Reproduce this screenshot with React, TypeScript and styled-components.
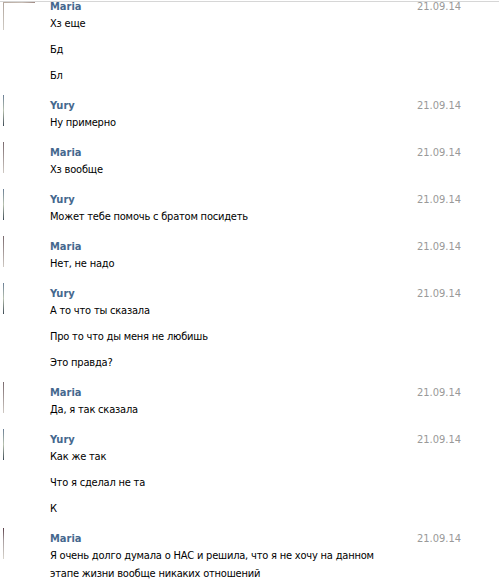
import React from "react";
import styled, { createGlobalStyle } from "styled-components";

const Global = createGlobalStyle`
  html, body { margin: 0; padding: 0; background: #fff; }
  body { font-family: "DejaVu Sans Condensed", "DejaVu Sans", sans-serif; font-size: 11px; color: #000; }
`;

const Page = styled.div`
  margin-top: 1px;
  border-top: 1px solid #d6d6d6;
  width: 499px;
`;

const Group = styled.div<{ $first?: boolean }>`
  display: flex;
  align-items: flex-start;
  margin-top: ${(p) => (p.$first ? "-3px" : "13px")};
  padding: 0 38px 0 3px;
`;

const Avatar = styled.div<{ $tone: string; $top?: boolean }>`
  flex: none;
  width: 1px;
  height: ${(p) => (p.$top ? "28px" : "31px")};
  margin-top: ${(p) => (p.$top ? "3px" : "-3px")};
  background: ${(p) => p.$tone};
  position: relative;
  &::after {
    content: "";
    display: ${(p) => (p.$top ? "block" : "none")};
    position: absolute;
    left: 0;
    top: 0;
    width: 32px;
    height: 1px;
    background: linear-gradient(90deg, #b8aaa0, #c7bdb5 60%, #a08a84);
  }
`;

const Body = styled.div`
  flex: 1;
  margin-left: 46px;
  display: flex;
  flex-direction: column;
`;

const Name = styled.div`
  font-weight: bold;
  color: #45688e;
  line-height: 16px;
  height: 16px;
`;

const Text = styled.div`
  line-height: 18px;
  width: 345px;
  letter-spacing: -0.2px;
  & + & { margin-top: 8px; }
`;

const Date = styled.div`
  flex: none;
  color: #999;
  line-height: 16px;
`;

type Msg = { name: string; lines: string[]; tone: string };

const yury = "linear-gradient(#6b7f95, #b9c2b0 50%, #3d4a55)";
const maria = "linear-gradient(#7a6a6e, #cfc9c3)";

const data: Msg[] = [
  { name: "Maria", lines: ["Хз еще", "Бд", "Бл"], tone: "linear-gradient(#b0a49c, #d0cbc4)" },
  { name: "Yury", lines: ["Ну примерно"], tone: yury },
  { name: "Maria", lines: ["Хз вообще"], tone: maria },
  { name: "Yury", lines: ["Может тебе помочь с братом посидеть"], tone: yury },
  { name: "Maria", lines: ["Нет, не надо"], tone: maria },
  { name: "Yury", lines: ["А то что ты сказала", "Про то что ды меня не любишь", "Это правда?"], tone: yury },
  { name: "Maria", lines: ["Да, я так сказала"], tone: maria },
  { name: "Yury", lines: ["Как же так", "Что я сделал не та", "К"], tone: yury },
  {
    name: "Maria",
    lines: ["Я очень долго думала о НАС и решила, что я не хочу на данном этапе жизни вообще никаких отношений"],
    tone: "linear-gradient(#5a3f48, #a89ea0 40%, #d8d4cc)",
  },
];

export default function App() {
  return (
    <>
      <Global />
      <Page>
        {data.map((m, i) => (
          <Group key={i} $first={i === 0}>
            <Avatar $tone={m.tone} $top={i === 0} />
            <Body>
              <Name>{m.name}</Name>
              {m.lines.map((l, j) => (
                <Text key={j}>{l}</Text>
              ))}
            </Body>
            <Date>21.09.14</Date>
          </Group>
        ))}
      </Page>
    </>
  );
}
